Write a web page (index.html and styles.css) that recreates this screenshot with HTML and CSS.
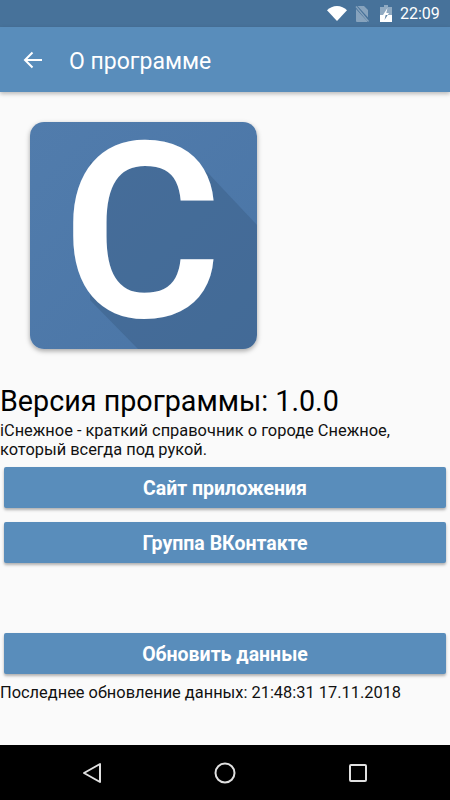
FILE: index.html
```html
<!DOCTYPE html>
<html lang="ru">
<head>
    <meta charset="UTF-8">
    <meta name="viewport" content="width=device-width, initial-scale=1.0">
    <title>О программе</title>
    <link rel="stylesheet" href="styles.css">
</head>
<body>
    <div class="screen">
        <div class="status-bar">
            <svg class="wifi" width="20" height="15" viewBox="0 0 20 15"><path d="M0 4.300C2.600 1.700 6.100 0 10 0s7.400 1.700 10 4.300L10 15z" fill="#fff"/></svg>
            <svg class="sim" width="14" height="16" viewBox="0 0 14 16"><path d="M2 0h7l4 4v7.500L3 .5zM1 3l11 12v1H2a1 1 0 0 1-1-1z" fill="#fff" opacity=".35"/><path d="M.5 1l1-1L14 15l-1 1z" fill="#fff" opacity=".35"/></svg>
            <svg class="battery" width="12" height="17" viewBox="0 0 12 17"><path d="M4 0h4v2h4v15H0V2h4z" fill="#fff" opacity=".4"/><path d="M0 10h12v7H0z" fill="#fff"/><path d="M7.500 3L3 10h4.700L9 8H6.300z" fill="#fff"/><path d="M5.700 10L4.500 15l3.200-5z" fill="#5f84a6"/></svg>
            <span class="clock">22:09</span>
        </div>
        <header class="toolbar">
            <svg class="back-arrow" width="20" height="18" viewBox="0 0 20 18"><path d="M19 9H2M9.500 1.500L2 9l7.500 7.500" fill="none" stroke="#fff" stroke-width="2"/></svg>
            <h1 class="toolbar-title">О программе</h1>
        </header>
        <main class="content">
            <div class="logo">
                <svg class="logo-shadow" width="227" height="227" viewBox="0 0 227 227"><polygon points="60,40 150,35 178,51 227,103 227,227 108,227 60,178" fill="#3c6088" opacity=".5"/></svg>
                <span class="logo-letter">C</span>
            </div>
            <h2 class="version">Версия программы: 1.0.0</h2>
            <p class="about">iСнежное - краткий справочник о городе Снежное,<br>который всегда под рукой.</p>
            <button class="action">Сайт приложения</button>
            <button class="action">Группа ВКонтакте</button>
            <button class="action action-update">Обновить данные</button>
            <p class="about updated">Последнее обновление данных: 21:48:31 17.11.2018</p>
        </main>
        <nav class="nav-bar">
            <svg width="20" height="22" viewBox="0 0 20 22"><path d="M18 2v18L2 11z" fill="none" stroke="#e0e0e0" stroke-width="2" stroke-linejoin="round"/></svg>
            <svg width="22" height="22" viewBox="0 0 22 22"><circle cx="11" cy="11" r="9.500" fill="none" stroke="#e0e0e0" stroke-width="2"/></svg>
            <svg width="20" height="20" viewBox="0 0 20 20"><rect x="2" y="2" width="16" height="16" rx="1" fill="none" stroke="#e0e0e0" stroke-width="2"/></svg>
        </nav>
    </div>
</body>
</html>
```

FILE: styles.css
```css
body{
    margin: 0;
    padding: 0;
    background-color: #fafafa;
    font-family: Roboto, "Noto Sans", sans-serif;
    color: black;
}

.screen{
    height: 800px;
    display: flex;
    flex-direction: column;
    overflow: hidden;
}

.status-bar{
    height: 27px;
    flex-shrink: 0;
    background-color: #47729a;
    display: flex;
    align-items: center;
    justify-content: flex-end;
    padding-right: 10px;
}

.wifi{
    margin-right: 8px;
}

.sim{
    margin-right: 11px;
}

.battery{
    margin-right: 8px;
}

.clock{
    color: white;
    font-size: 16px;
    width: 40px;
}

.toolbar{
    height: 65px;
    flex-shrink: 0;
    background-color: #598dbb;
    display: flex;
    align-items: center;
    padding-left: 23px;
    box-shadow: 0 2px 4px rgba(0, 0, 0, 0.25);
    position: relative;
}

.toolbar-title{
    margin: 4px 0 0 26px;
    color: white;
    font-size: 23px;
    font-weight: 400;
}

.content{
    flex: 1;
    display: flex;
    flex-direction: column;
}

.logo{
    width: 227px;
    height: 227px;
    margin: 30px 0 0 30px;
    border-radius: 14px;
    background: linear-gradient(135deg, #517cac, #4a75a6);
    box-shadow: 0 2px 5px rgba(0, 0, 0, 0.35);
    display: flex;
    align-items: center;
    justify-content: center;
    position: relative;
}

.logo-shadow{
    position: absolute;
    left: 0;
    top: 0;
    border-radius: 14px;
}

.logo-letter{
    color: white;
    font-size: 245px;
    font-weight: 600;
    line-height: 200px;
    margin: -4px 0 0 -3px;
    position: relative;
}

.version{
    margin: 35px 0 0 0;
    font-size: 28.700px;
    font-weight: 400;
    line-height: 34px;
}

.about{
    margin: 3px 0 0 0;
    font-size: 16.400px;
    line-height: 19px;
    color: #111;
}

.action{
    display: block;
    height: 41px;
    margin: 8px 4px 6px 4px;
    padding: 2px 0 0 0;
    border: 0;
    border-radius: 2px;
    background-color: #598dbb;
    color: white;
    font-family: inherit;
    font-size: 19.500px;
    font-weight: 700;
    box-shadow: 0 2px 3px rgba(0, 0, 0, 0.3);
}

.action-update{
    margin-top: 64px;
}

.updated{
    margin-top: 3px;
}

.nav-bar{
    height: 55px;
    flex-shrink: 0;
    background-color: black;
    padding: 0 25.500px;
    display: grid;
    grid-template-columns: repeat(3, 1fr);
    justify-items: center;
    align-items: center;
}
```
